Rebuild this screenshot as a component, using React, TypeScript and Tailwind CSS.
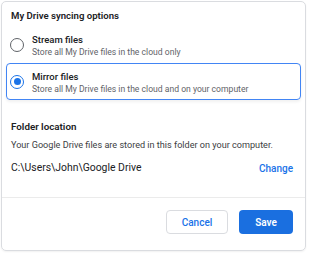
import React from "react";

const options = [
    { id: "stream", title: "Stream files", desc: "Store all My Drive files in the cloud only" },
    { id: "mirror", title: "Mirror files", desc: "Store all My Drive files in the cloud and on your computer" },
];

function Radio({ checked }: { checked: boolean }) {
    return (
        <span
            className={
                "flex h-[14px] w-[14px] shrink-0 items-center justify-center rounded-full border-[1.5px] " +
                (checked ? "border-[#1a73e8]" : "border-[#5f6368]")
            }
        >
            {checked && <span className="h-[7px] w-[7px] rounded-full bg-[#1a73e8]" />}
        </span>
    );
}

export default function App() {
    const selected = "mirror";

    return (
        <div className="h-[255px] w-[310px] bg-white p-px font-['Roboto',sans-serif] text-[#202124]">
            <div className="flex h-[250px] w-[305px] flex-col rounded-[5px] border border-[#dadce0] shadow-[0_1px_2px_rgba(0,0,0,0.06)]">
                <div className="flex-1">
                    <h2 className="px-[9px] pt-[6px] text-[9.6px] font-semibold leading-[16px]">My Drive syncing options</h2>

                    <div className="mt-[2px] flex flex-col px-[4px]">
                        {options.map((opt) => {
                            const checked = opt.id === selected;
                            return (
                                <div
                                    key={opt.id}
                                    className={
                                        "flex h-[37px] items-center gap-[8px] rounded-[4px] border pl-[3px] " +
                                        (checked
                                            ? "border-[#4285f4] shadow-[0_2px_3px_rgba(0,0,0,0.06)]"
                                            : "border-transparent")
                                    }
                                >
                                    <Radio checked={checked} />
                                    <div className="flex flex-col pt-[2px]">
                                        <span className="text-[9.5px] font-medium leading-[13px]">{opt.title}</span>
                                        <span className="text-[8.6px] leading-[13px] text-[#5f6368]">{opt.desc}</span>
                                    </div>
                                </div>
                            );
                        })}
                    </div>

                    <div className="mt-[20px] px-[9px]">
                        <h3 className="text-[9.8px] font-semibold leading-[14px]">Folder location</h3>
                        <p className="mt-[4px] text-[9.1px] leading-[14px] text-[#3c4043]">
                            Your Google Drive files are stored in this folder on your computer.
                        </p>
                        <div className="mt-[8px] flex items-center justify-between">
                            <span className="text-[10.4px] leading-[16px]">C:\Users\John\Google Drive</span>
                            <button className="pr-[3px] text-[10px] font-medium text-[#1a73e8]">Change</button>
                        </div>
                    </div>
                </div>

                <div className="flex h-[53px] justify-end gap-[11px] border-t border-[#ebebeb] pr-[12px] pt-[12px]">
                    <button className="h-[24px] w-[62px] rounded-[4px] border border-[#dadce0] text-[10px] font-medium text-[#1a73e8]">
                        Cancel
                    </button>
                    <button className="h-[24px] w-[54px] rounded-[4px] bg-[#1a6fe0] text-[10px] font-semibold text-white">
                        Save
                    </button>
                </div>
            </div>
        </div>
    );
}
